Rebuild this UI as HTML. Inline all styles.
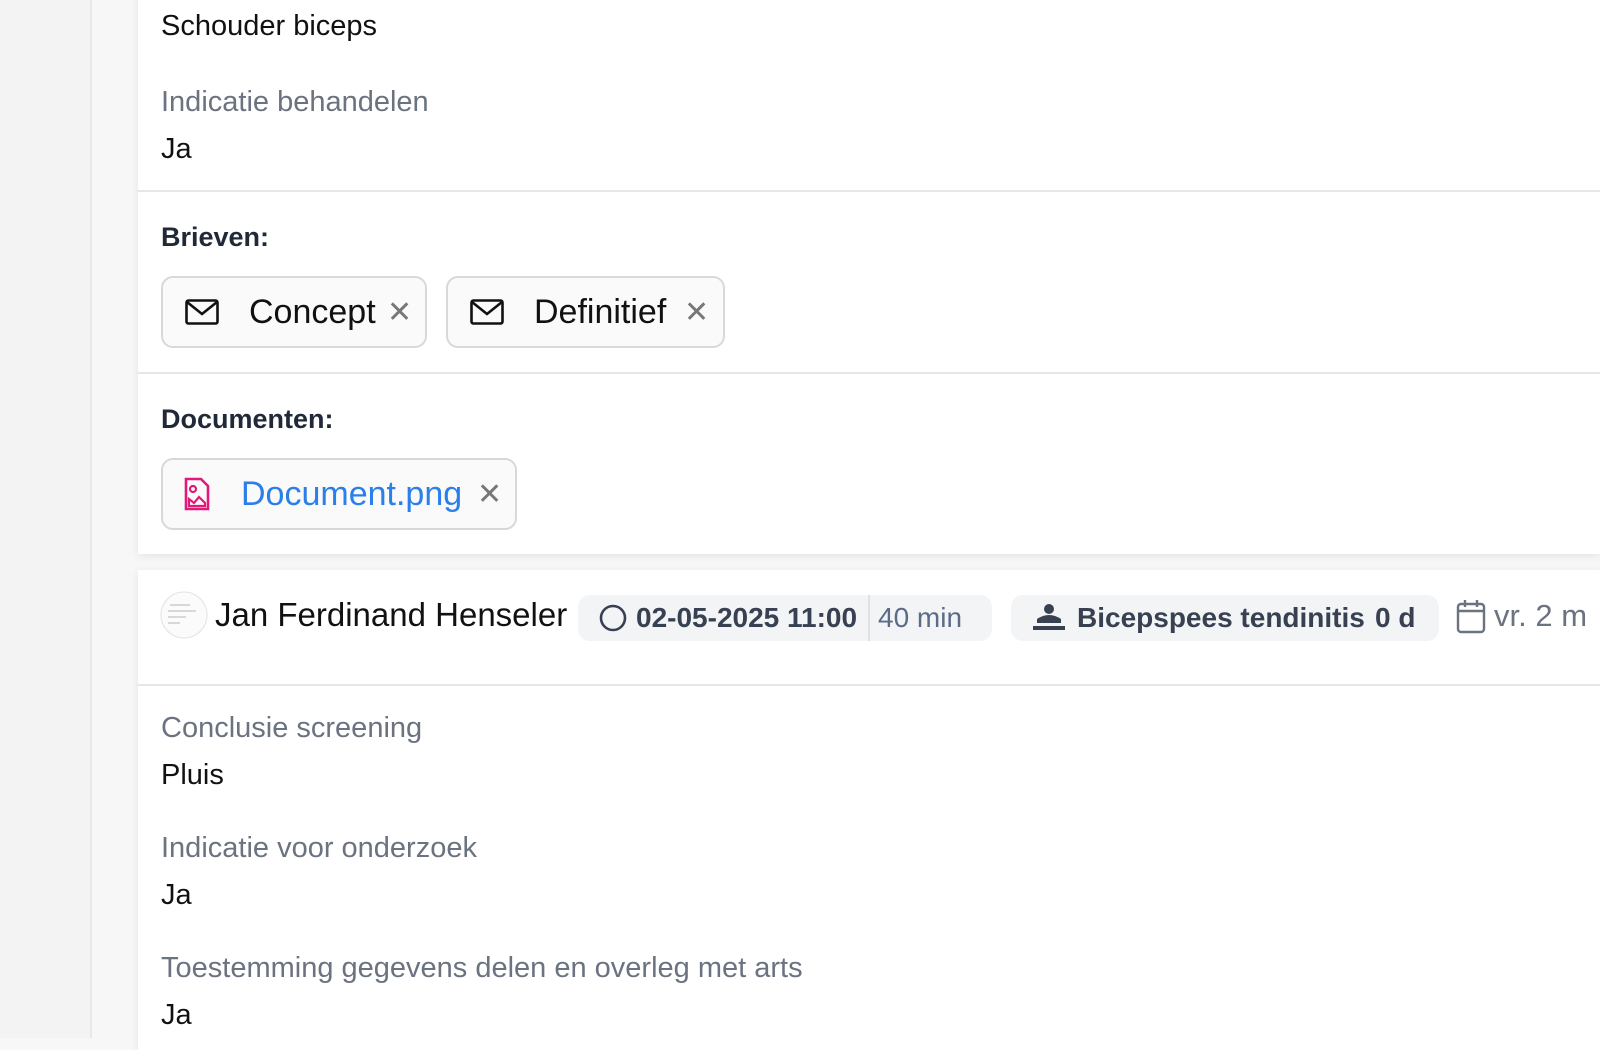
<!DOCTYPE html>
<html><head><meta charset="utf-8"><style>
*{box-sizing:border-box;margin:0;padding:0}
body{width:1600px;height:1038px;overflow:hidden;background:#f7f7f8;font-family:"Liberation Sans",sans-serif;position:relative}
.side{position:absolute;left:0;top:0;width:92px;height:1038px;background:#f3f3f4;border-right:2px solid #e9e9eb}
.card{position:absolute;left:138px;right:0;background:#fff;box-shadow:0 2px 8px rgba(0,0,0,.08)}
.lbl{position:absolute;left:23px;font-size:29px;color:#6b7280}
.val{position:absolute;left:23px;font-size:29px;color:#111}
.hd{position:absolute;left:23px;font-size:27px;color:#1f2937;font-weight:bold}
.hr{position:absolute;left:0;right:0;height:2px;background:#e5e7eb}
.chip{position:absolute;height:72px;border:2px solid #d6d8dc;border-radius:12px;background:#fafafa;display:flex;align-items:center;font-size:34px}
.chip .x{color:#777;font-size:30px;position:absolute}
.pill{position:absolute;top:25px;height:46px;border-radius:12px;background:#f3f4f6;display:flex;align-items:center;font-size:28px;color:#374151;font-weight:bold}
</style></head><body>
<div class="side"></div>
<div class="card" style="top:-10px;height:564px">
 <div class="val" style="top:20px">Schouder biceps</div>
 <div class="lbl" style="top:96px">Indicatie behandelen</div>
 <div class="val" style="top:143px">Ja</div>
 <div class="hr" style="top:200px"></div>
 <div class="hd" style="top:232px">Brieven:</div>
 <div class="chip" style="left:23px;top:286px;width:266px">
  <svg style="position:absolute;left:22px" width="34" height="26" viewBox="0 0 34 26"><rect x="1.5" y="1.5" width="31" height="23" rx="2" fill="none" stroke="#111" stroke-width="2.6"/><path d="M2 3 L17 15 L32 3" fill="none" stroke="#111" stroke-width="2.6"/></svg>
  <span style="position:absolute;left:86px;color:#111">Concept</span><span class="x" style="left:224px">✕</span></div>
 <div class="chip" style="left:308px;top:286px;width:279px">
  <svg style="position:absolute;left:22px" width="34" height="26" viewBox="0 0 34 26"><rect x="1.5" y="1.5" width="31" height="23" rx="2" fill="none" stroke="#111" stroke-width="2.6"/><path d="M2 3 L17 15 L32 3" fill="none" stroke="#111" stroke-width="2.6"/></svg>
  <span style="position:absolute;left:86px;color:#111">Definitief</span><span class="x" style="left:236px">✕</span></div>
 <div class="hr" style="top:382px"></div>
 <div class="hd" style="top:414px">Documenten:</div>
 <div class="chip" style="left:23px;top:468px;width:356px">
  <svg style="position:absolute;left:20px" width="28" height="34" viewBox="0 0 28 34"><path d="M3 2 H18 L25 9 V32 H3 Z" fill="none" stroke="#e3197a" stroke-width="2.6"/><circle cx="10" cy="12" r="3" fill="none" stroke="#e3197a" stroke-width="2.2"/><path d="M6 29 V22 L11 26 L16 20 L22 26 V29 Z" fill="none" stroke="#e3197a" stroke-width="2.2"/></svg>
  <span style="position:absolute;left:78px;color:#2b7fe8">Document.png</span><span class="x" style="left:314px">✕</span></div>
</div>
<div class="card" style="top:570px;height:480px">
 <svg style="position:absolute;left:22px;top:21px" width="48" height="48"><circle cx="24" cy="24" r="23" fill="#fbfbfb" stroke="#e2e2e2"/><path d="M10 14h20M8 20h28M8 26h18M8 32h12" stroke="#ccc" stroke-width="1.4"/></svg>
 <div style="position:absolute;left:77px;top:26px;font-size:33px;color:#111">Jan Ferdinand Henseler</div>
 <div class="pill" style="left:440px;width:414px">
  <svg style="position:absolute;left:20px" width="30" height="30"><circle cx="15" cy="15" r="12" fill="none" stroke="#374151" stroke-width="2.6"/></svg>
  <span style="position:absolute;left:58px">02-05-2025 11:00</span>
  <div style="position:absolute;left:290px;top:0;width:2px;height:46px;background:#e0e1e4"></div>
  <span style="position:absolute;left:300px;color:#5b6b88;font-weight:normal">40 min</span></div>
 <div class="pill" style="left:873px;width:428px">
  <svg style="position:absolute;left:20px" width="36" height="30" viewBox="0 0 36 30"><circle cx="18" cy="6" r="5" fill="#374151"/><path d="M6 16 Q18 8 30 16 L30 20 L6 20Z" fill="#374151"/><rect x="2" y="23" width="32" height="4" fill="#374151"/></svg>
  <span style="position:absolute;left:66px">Bicepspees tendinitis</span>
  <span style="position:absolute;left:364px">0 d</span></div>
 <svg style="position:absolute;left:1318px;top:28px" width="30" height="36" viewBox="0 0 30 36"><rect x="2" y="6" width="26" height="28" rx="3" fill="none" stroke="#6b7280" stroke-width="2.4"/><path d="M2 13h26M9 2v7M21 2v7" stroke="#6b7280" stroke-width="2.4"/></svg>
 <div style="position:absolute;left:1356px;top:28px;font-size:31px;color:#6b7280">vr. 2 m</div>
 <div class="hr" style="top:114px"></div>
 <div class="lbl" style="top:142px">Conclusie screening</div>
 <div class="val" style="top:189px">Pluis</div>
 <div class="lbl" style="top:262px">Indicatie voor onderzoek</div>
 <div class="val" style="top:309px">Ja</div>
 <div class="lbl" style="top:382px">Toestemming gegevens delen en overleg met arts</div>
 <div class="val" style="top:429px">Ja</div>
</div>
</body></html>
